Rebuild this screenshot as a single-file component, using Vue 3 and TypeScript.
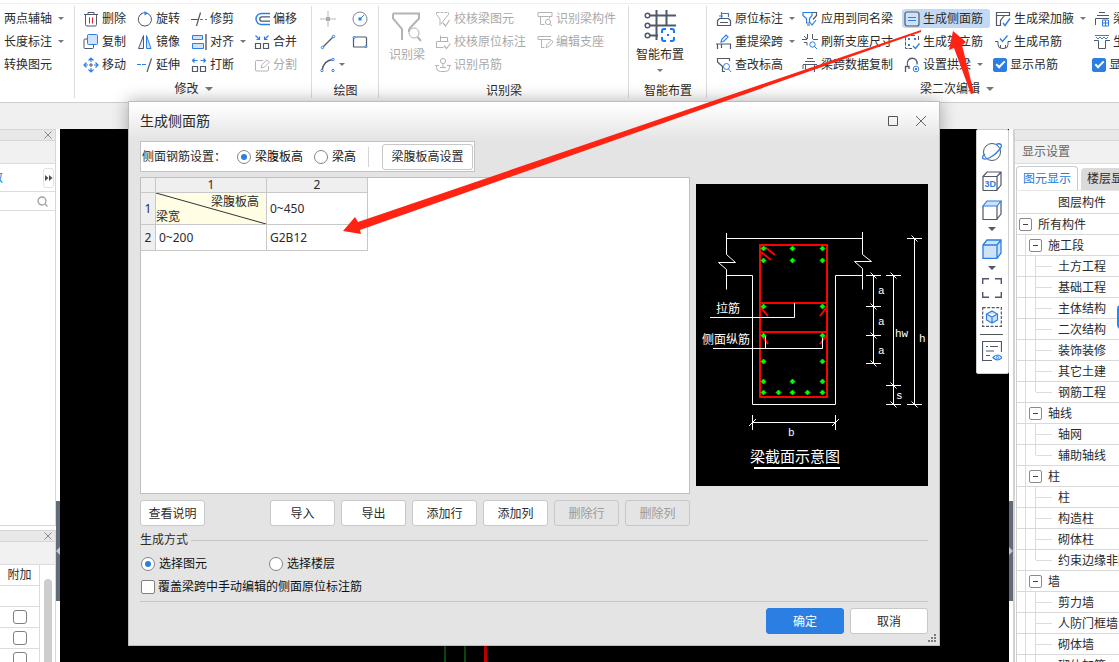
<script setup lang="ts">
import { ref } from 'vue'

interface Tool {
  icon?: string
  label?: string
  caret?: boolean
  disabled?: boolean
  active?: boolean
  check?: boolean
}
interface Group {
  id: string
  caption: string
  captionCaret?: boolean
  big?: { icon: string; label: string; caret?: boolean; disabled?: boolean }
  tools: Tool[]
}
interface Node {
  level: 0 | 1 | 2
  label: string
  last?: boolean
}

const D = '#50586a'
const B = '#2b7fe6'
const G = '#b4b4b4'
const L = '#cfe2fa'
const s = (c: string, d: string, extra = '') => `<path d="${d}" fill="none" stroke="${c}" ${extra}/>`
const f = (c: string, d: string) => `<path d="${d}" fill="${c}"/>`
const ring = (c: string, x: number, y: number, r: number, fill = 'none') =>
  `<circle cx="${x}" cy="${y}" r="${r}" fill="${fill}" stroke="${c}"/>`

const icons: Record<string, string> = {
  trash: s(D, 'M1 3.5h14M5 3.5v-2h6v2M2.5 4v9.5q0 1.5 1.5 1.5h8q1.5 0 1.5-1.5V4') + s('#d22', 'M6.5 6.5v6M9.5 6.5v6'),
  rotate: s(D, 'M10 2.2A6.6 6.6 0 1 1 5.5 2.3') + s(B, 'M4 2.6A7 7 0 0 1 9 2') + f(B, 'M7.5 0l3.5 2.2-3.5 2.3z'),
  trim: s(D, 'M0 8.5h7M9.5 1.5L5.5 15', 'stroke-width="1.2"') + s(B, 'M9 8.5h3M14 8.5h2', 'stroke-width="1.2"'),
  offset: s(B, 'M16 2.5H7.5a5.5 5.5 0 0 0 0 11H16', 'stroke-width="1.4"') + s(D, 'M16 5.8H8a2.2 2.2 0 0 0 0 4.4H16', 'stroke-width="1.3"'),
  copy: s(D, 'M10.5 11v2.5q0 1-1 1h-7.5q-1 0-1-1V6q0-1 1-1h2') + `<rect x="4.5" y="0.5" width="10" height="10" rx="1" fill="${L}" stroke="${B}"/>`,
  mirror: `<path d="M6.5 1.5v13H1.5z" fill="#eef0f3" stroke="${D}"/><path d="M9.5 1.5v13h4.500z" fill="${L}" stroke="${B}"/>`,
  align: `<path d="M1.5 1.5h10v4h-10zM1.5 9.5h11v5h-11z" fill="${L}" stroke="${B}"/>` + s(D, 'M15 0v16', 'stroke-width="1.4"'),
  merge: s(D, 'M1.5 9.5h5v5h-5zM9.5 9.5h5v5h-5z', 'stroke-width="1.2"') + s(B, 'M1.5 1.5l3.5 3.5M5.5 2.5v3h-3M14.5 1.5L11 5M10.5 2.5v3h3', 'stroke-width="1.2"'),
  move: s(B, 'M8 1v4M8 11v4M1 8h4M11 8h4M5.5 3.5L8 1l2.500 2.500M5.5 12.5L8 15l2.5-2.5M3.5 5.5L1 8l2.5 2.5M12.5 5.5L15 8l-2.5 2.5', 'stroke-width="1.2"') + f(D, 'M7.5 6h1v4h-1zM6 7.5h4v1H6z'),
  extend: s(B, 'M0 7.5h4M5 7.5h4', 'stroke-width="1.2"') + s(D, 'M14.5 1.5L10 15', 'stroke-width="1.2"'),
  split: s(D, 'M1.5 9.5h5v5h-5zM9.5 9.5h5v5h-5z', 'stroke-width="1.2"') + s(B, 'M1.5 3.5h5M3.5 1.5l-2 2 2 2M14.5 3.5h-5M12.5 1.5l2 2-2 2', 'stroke-width="1.2"'),
  cut: s(G, 'M9 3.5H2.5q-1 0-1 1V13q0 1 1 1h11q1 0 1-1V9M7 11l1-3.5L13 3l2.5 2L10.5 10z'),
  point: s('#b9b9b9', 'M8 0v6M8 10v6M0 8h6M10 8h6') + f('#aaa', 'M6 6h4v4H6z'),
  circle: s('#7c8290', 'M15 8A7 7 0 1 1 8 1a7 7 0 0 1 7 7z') + s(B, 'M8 8l4-4') + f(B, 'M6.500 6.500h3v3h-3z'),
  line: s(D, 'M2.5 13.5l11-11', 'stroke-width="1.3"') + ring(B, 2.5, 13.5, 1.2, '#fff') + ring(B, 13.5, 2.5, 1.2, '#fff'),
  rect: s(D, 'M2.5 3h11q1 0 1 1v9H2.5q-1 0-1-1V4', 'stroke-width="1.2"') + ring(B, 2, 3.5, 1, '#fff') + ring(B, 14, 12.5, 1, '#fff'),
  arc: s(D, 'M2 13.5C3 7 7 3 13 2.5', 'stroke-width="1.3"') + ring(B, 2, 13.5, 1.2, '#fff') + ring(B, 13, 2.5, 1.2, '#fff') + ring(B, 13, 13.5, 1.2, '#fff'),
  checkElem: s(G, 'M1.5 1.5h12', 'stroke-dasharray="3 1"') + s(G, 'M1.5 1.5v2L5 8v6.5M13.5 1.5v2L6 13') + s(G, 'M8 12l2.5 3 4-6', 'stroke-width="1.2"'),
  checkNote: s(G, 'M5.5 7V1.5M5.5 3.5h7M12.5 3.5V7M1.5 14V7.5h12M1.5 13.5h7') + s(G, 'M9 11.5l2.5 3 4-5', 'stroke-width="1.2"'),
  hook: ring(G, 8, 4, 2.6) + s(G, 'M8 7v4M1.5 8.5v2q0 4 4 4h5q4 0 4-4v-2M0 8.5h4M12 8.5h4M5 10.5h6'),
  findBeam: s(G, 'M1 1.5h14v4H1zM3.5 5.5v8h4M12.5 5.5v2') + ring(G, 11, 11, 2.6) + s(G, 'M13 13l2 2'),
  editSeat: s(G, 'M1 2.5h13M1 2.5v3h13M4.5 5.5v8h3M9 13.5l1-3L14.5 6l1.5 2-4 4.500z'),
  note: s(D, 'M1.5 14.5v-5l2-2h9l2 2v5zM4 11.5h8', 'stroke-width="1.2"') + s(B, 'M5.5 7V1M5.500 2.500h7V6M3 5h4', 'stroke-width="1.2"'),
  respan: s(D, 'M1.5 15v-5h13v5M5.5 10v4M0 10h3', 'stroke-width="1.2"') + s(B, 'M5 8l1-3L10 1l2 2-4.5 4.5z', 'stroke-width="1.2"'),
  funnelFind: s(D, 'M9 14.5H6.500v-5L1.500 5V1.5h12V4', 'stroke-width="1.2"') + ring(B, 10.5, 9.5, 3) + s(B, 'M12.5 12l2.5 3'),
  applySame: s(D, 'M5 1.5h9.5v3L11 8.5M5 14h3', 'stroke-width="1.2"') + s(B, 'M1 1.5h9v3L7.5 7.5V12H4.5V7.5L1 4.5z', 'stroke-width="1.2"') + s(B, 'M8 11.5l2 2.500 4-5', 'stroke-width="1.2"'),
  refresh: s(D, 'M0 5.5h5M5.5 0v5M10.5 0v5M11 5.5h5M2 8.5h3v3M2 2l3 3') + ring(B, 10.5, 10.5, 2.7) + s(B, 'M12.5 12.5l2.5 2.500'),
  spanCopy: s(D, 'M5 1.5h6M3 4.5h10M1 7.5h14M3.5 8v7M12.5 8v7M1 12V8M15 12V8'),
  sideBar: `<rect x="1" y="1" width="14" height="14" rx="2" fill="${L}" stroke="${D}" stroke-width="1.2"/>` + s(B, 'M4 6.5h8M4 9.5h8', 'stroke-width="1.2"'),
  erectBar: s(D, 'M11 1.5H2.5q-1 0-1 1V14.5H8M14.5 2v5', 'stroke-dasharray="4 1"') + f(B, 'M4 4h2v2H4zM10 4h2v2h-2zM4 10h2v2H4z') + s(B, 'M9 12l2.5 2.5 4-5', 'stroke-width="1.3"'),
  archBeam: s(D, 'M3.5 8.5C1.5 -1 14.5 -1 13 7.5M1.500 15V9.5h3.5V12', 'stroke-width="1.3"') + ring(B, 12, 12, 2.8) + f(B, 'M11 11h2v2h-2z'),
  haunch: s(D, 'M1.5 1.5h13v3h-13zM1.5 4.5v10h4v-5l4-5', 'stroke-width="1.2"') + s(B, 'M8 12l2 2.5 5-7', 'stroke-width="1.4"'),
  makeHook: s(D, 'M0 7.5h3v3q0 4 4 4h2q4 0 4-4v-3h3M5.5 11v3M10.5 11v3') + s(B, 'M5 4.5l2.5 3 5-6', 'stroke-width="1.3"'),
  beamA: s(D, 'M5 1.5h6M3 4.5h12M1.5 14V7.5H15') + `<path d="M8.5 9h6v6h-6zM11.5 9v6M8.5 12h6" fill="none" stroke="${B}"/>`,
  beamB: s(B, 'M1 1.5h14M2 3l2 2 2-2 2 2 2-2 2 2 2-2') + s(D, 'M0 6.5h4.5v8h7v-8H16'),
  bigFunnel: s(G, 'M2 3.5h26v5L18 19M2 3.5v5L11 19v11', 'stroke-width="2"') + ring(G, 23, 23, 5) + s(G, 'M26.5 27l3.5 4M18 19v3', 'stroke-width="2"'),
  bigLayout: s(D, 'M5 5.5h27M5 15.5h27M5 25.5h9M12.5 0v30M22.5 0v16', 'stroke-width="2"') + f('#fff', 'M0 3h6v5H0zM0 13h6v5H0zM0 23h6v5H0z') +
    [5.5, 15.5, 25.5].map(y => `<circle cx="3.5" cy="${y}" r="2.3" fill="#fff" stroke="${D}" stroke-width="1.5"/>`).join('') +
    `<rect x="15" y="18" width="16" height="15" fill="#fff"/>` +
    s('#1677ff', 'M18 23v-2q0-2 2-2h2M26 19h2q2 0 2 2v2M30 27v2q0 2-2 2h-2M22 31h-2q-2 0-2-2v-2', 'stroke-width="2"') + f('#1677ff', 'M23 24h2v2h-2z'),
  orbit: ring(D, 10, 10, 8.5) + s(B, 'M3 12C-2 16 1 19 8 15.5S21 4 19 2.5s-4-.5-5 0', 'stroke-width="1.3"'),
  cube3d: s(D, 'M1 5.5h14v14H2q-1 0-1-1zM1 5.5L5 1h14v13l-4 5M15 5.5L19 1', 'stroke-width="1.2"') + `<text x="2.5" y="16" font-size="9" font-weight="700" font-family="Liberation Sans, sans-serif" fill="${B}">3D</text>`,
  cubeTop: s(D, 'M1 6v13.5h14V6M15 19l4-5V1', 'stroke-width="1.2"') + `<path d="M1 6l4-5h14l-4 5z" fill="${L}" stroke="${B}" stroke-width="1.2"/>`,
  cubeFull: `<path d="M1 6l4-5h14v13l-4 5.5H1zM1 6h14v13M15 6l4-5" fill="${L}" stroke="${B}" stroke-width="1.3"/>`,
  frame: s(D, 'M.7 6V.7H7M13 .7h6.300V6M19.3 14v5.300H13M7 19.300H.7V14', 'stroke-width="1.4"'),
  isolate: `<rect x="0.7" y="0.7" width="18.6" height="18.6" fill="none" stroke="${D}" stroke-dasharray="3 1.5" stroke-width="1.2"/>` + `<path d="M10 4l5.5 3v6L10 16l-5.5-3V7zM4.5 7L10 10l5.5-3M10 10v6" fill="${L}" stroke="${B}" stroke-width="1.2"/>`,
  listEye: s(D, 'M10 19.5H.5V.5h19V11M4 5.5h2M8 5.5h8M4 10h8M4 14.5h4', 'stroke-width="1.2"') + s(B, 'M11 16.5q4.5-5 9 0q-4.5 5-9 0z', 'stroke-width="1.2"') + ring(B, 15.5, 16.5, 1.2),
}

const groups: Group[] = [
  { id: 'axis', caption: '', tools: [{ label: '两点辅轴', caret: true }, { label: '长度标注', caret: true }, { label: '转换图元' }] },
  {
    id: 'modify', caption: '修改', captionCaret: true,
    tools: [
      { icon: 'trash', label: '删除' }, { icon: 'copy', label: '复制' }, { icon: 'move', label: '移动' },
      { icon: 'rotate', label: '旋转' }, { icon: 'mirror', label: '镜像' }, { icon: 'extend', label: '延伸' },
      { icon: 'trim', label: '修剪' }, { icon: 'align', label: '对齐', caret: true }, { icon: 'split', label: '打断' },
      { icon: 'offset', label: '偏移' }, { icon: 'merge', label: '合并' }, { icon: 'cut', label: '分割', disabled: true },
    ],
  },
  { id: 'draw', caption: '绘图', tools: [{ icon: 'point' }, { icon: 'line' }, { icon: 'arc', caret: true }, { icon: 'circle' }, { icon: 'rect' }] },
  {
    id: 'identify', caption: '识别梁', big: { icon: 'bigFunnel', label: '识别梁', disabled: true },
    tools: [
      { icon: 'checkElem', label: '校核梁图元', disabled: true }, { icon: 'checkNote', label: '校核原位标注', disabled: true }, { icon: 'hook', label: '识别吊筋', disabled: true },
      { icon: 'findBeam', label: '识别梁构件', disabled: true }, { icon: 'editSeat', label: '编辑支座', disabled: true },
    ],
  },
  { id: 'layout', caption: '智能布置', big: { icon: 'bigLayout', label: '智能布置', caret: true }, tools: [] },
  {
    id: 'beam', caption: '梁二次编辑', captionCaret: true,
    tools: [
      { icon: 'note', label: '原位标注', caret: true }, { icon: 'respan', label: '重提梁跨', caret: true }, { icon: 'funnelFind', label: '查改标高' },
      { icon: 'applySame', label: '应用到同名梁' }, { icon: 'refresh', label: '刷新支座尺寸' }, { icon: 'spanCopy', label: '梁跨数据复制' },
      { icon: 'sideBar', label: '生成侧面筋', active: true }, { icon: 'erectBar', label: '生成架立筋' }, { icon: 'archBeam', label: '设置拱梁', caret: true },
      { icon: 'haunch', label: '生成梁加腋', caret: true }, { icon: 'makeHook', label: '生成吊筋' }, { label: '显示吊筋', check: true },
      { icon: 'beamA', label: '梁加密筋' }, { icon: 'beamB', label: '生成支座' }, { label: '显示加密', check: true },
    ],
  },
]

const tree: Node[] = [
  { level: 0, label: '所有构件' },
  { level: 1, label: '施工段' },
  { level: 2, label: '土方工程' }, { level: 2, label: '基础工程' }, { level: 2, label: '主体结构' }, { level: 2, label: '二次结构' },
  { level: 2, label: '装饰装修' }, { level: 2, label: '其它土建' }, { level: 2, label: '钢筋工程', last: true },
  { level: 1, label: '轴线' },
  { level: 2, label: '轴网' }, { level: 2, label: '辅助轴线', last: true },
  { level: 1, label: '柱' },
  { level: 2, label: '柱' }, { level: 2, label: '构造柱' }, { level: 2, label: '砌体柱' }, { level: 2, label: '约束边缘非阴影区', last: true },
  { level: 1, label: '墙' },
  { level: 2, label: '剪力墙' }, { level: 2, label: '人防门框墙' }, { level: 2, label: '砌体墙' }, { level: 2, label: '砌体加筋' },
]

const viewTools = ['orbit', 'cube3d', 'cubeTop', '', 'cubeFull', '', 'frame', 'isolate', '-', 'listEye']
const gridButtons = [
  { label: '导入' }, { label: '导出' }, { label: '添加行' }, { label: '添加列' },
  { label: '删除行', disabled: true }, { label: '删除列', disabled: true },
]

const dots: [number, number][] = [
  [67.5, 64.5], [96.5, 64.5], [126.5, 64.5], [67.5, 76.5], [96.5, 76.5], [126.5, 76.5],
  [67.5, 122.5], [126.5, 122.5], [67.5, 151.5], [126.5, 151.5], [67.5, 177.5], [126.5, 177.5],
  [67.5, 197.5], [96.5, 197.5], [126.5, 197.5],
  [67.5, 208.5], [82.5, 208.5], [96.5, 208.5], [111.5, 208.5], [126.5, 208.5],
]
const ticks: [number, number][] = [
  [177.5, 91.5], [177.5, 122.5], [177.5, 151.5], [177.5, 179.5],
  [197.5, 91.5], [197.5, 201.5], [197.5, 220.5], [218.5, 54.5], [218.5, 220.5],
]

const basis = ref('web')
const method = ref('element')
const overwrite = ref(false)
const rowsChecked = ref([false, false, false])
</script>

<template>
  <div class="app">
    <header class="ribbon">
      <section v-for="g in groups" :key="g.id" class="group" :class="g.id">
        <div class="group-body">
          <button v-if="g.big" class="big" :class="{ disabled: g.big.disabled }" :disabled="g.big.disabled">
            <svg width="32" height="33" viewBox="0 0 32 33" aria-hidden="true" v-html="icons[g.big.icon]"></svg>
            <span>{{ g.big.label }}</span>
            <i v-if="g.big.caret" class="caret"></i>
          </button>
          <div v-if="g.tools.length" class="tools">
            <template v-for="(t, i) in g.tools" :key="i">
              <label v-if="t.check" class="tool checked-tool"><input type="checkbox" class="box" checked /><span>{{ t.label }}</span></label>
              <button v-else class="tool" :class="{ active: t.active, disabled: t.disabled }" :disabled="t.disabled" :aria-label="t.label ?? t.icon">
                <svg v-if="t.icon" width="16" height="16" viewBox="0 0 16 16" aria-hidden="true" v-html="icons[t.icon]"></svg>
                <span v-if="t.label">{{ t.label }}</span>
                <i v-if="t.caret" class="caret"></i>
              </button>
            </template>
          </div>
        </div>
        <div v-if="g.caption" class="caption" :class="{ plain: !g.captionCaret }">{{ g.caption }}<i v-if="g.captionCaret" class="caret wide"></i></div>
      </section>
    </header>
    <div class="strip"></div>

    <main class="workspace">
      <aside class="left">
        <section class="dock grow">
          <div class="dock-head"><button class="x" aria-label="关闭"><svg width="8" height="8" viewBox="0 0 8 8"><path d="M.5.5l7 7M7.5.5l-7 7" stroke="#8a8a8a" /></svg></button></div>
          <div class="dock-sub"></div>
          <div class="dock-nav">
            <a href="#" class="cut-link">参数</a>
            <button class="more" aria-label="更多"><svg width="8" height="6" viewBox="0 0 8 6"><path d="M0 0l3.5 3L0 6zM4 0l3.5 3L4 6z" fill="#4a4f5c" /></svg></button>
          </div>
          <div class="dock-search"><svg width="11" height="11" viewBox="0 0 11 11"><circle cx="5" cy="5" r="4" fill="none" stroke="#a0a0a0" stroke-width="1.3" /><path d="M8 8l2.5 2.5" stroke="#a0a0a0" stroke-width="1.3" /></svg></div>
        </section>
        <section class="dock lower">
          <div class="dock-head"><button class="x" aria-label="关闭"><svg width="8" height="8" viewBox="0 0 8 8"><path d="M.5.5l7 7M7.5.5l-7 7" stroke="#8a8a8a" /></svg></button></div>
          <div class="dock-sub"></div>
          <div class="extra">
            <table class="extra-table">
              <thead><tr><th>附加</th></tr></thead>
              <tbody>
                <tr><td></td></tr>
                <tr v-for="(_, i) in rowsChecked" :key="i"><td><input v-model="rowsChecked[i]" type="checkbox" class="box" aria-label="附加" /></td></tr>
              </tbody>
            </table>
            <div class="scroll"><div class="thumb"></div></div>
          </div>
        </section>
      </aside>
      <div class="splitter"><div class="grip"><svg width="4" height="8" viewBox="0 0 4 8"><path d="M4 0v8L0 4z" fill="#c5cad2" /></svg></div></div>

      <div class="canvas">
        <svg class="axes" width="50" height="40" viewBox="0 0 50 40" aria-hidden="true">
          <path d="M5 0v40M25 0v40" stroke="#0a4a10" stroke-width="2" />
          <path d="M45.5 0v40" stroke="#c00000" stroke-width="3" />
        </svg>
        <nav class="view-tools">
          <template v-for="(v, i) in viewTools" :key="i">
            <i v-if="v === ''" class="slot"><i class="caret dark"></i></i>
            <hr v-else-if="v === '-'" />
            <button v-else :aria-label="v"><svg width="20" height="20" viewBox="0 0 20 20" v-html="icons[v]"></svg></button>
          </template>
        </nav>
      </div>
      <div class="splitter"><div class="grip"><svg width="4" height="8" viewBox="0 0 4 8"><path d="M0 0v8l4-4z" fill="#c5cad2" /></svg></div></div>

      <aside class="right">
        <div class="dock-head"></div>
        <h2>显示设置</h2>
        <div class="tabs"><button class="tab on">图元显示</button><button class="tab">楼层显示</button></div>
        <div class="tree">
          <div class="tree-head">图层构件</div>
          <ul>
            <li v-for="(n, i) in tree" :key="i" :class="'l' + n.level">
              <i v-if="n.level > 0" class="guide"></i>
              <i v-if="n.level === 2" class="branch" :class="{ last: n.last }"></i>
              <button v-if="n.level < 2" class="toggle" aria-label="折叠"></button>
              <span>{{ n.label }}</span>
            </li>
          </ul>
        </div>
        <div class="side-pill"></div>
      </aside>
    </main>

    <section class="dialog" role="dialog" aria-labelledby="dlg-title">
      <header class="title">
        <h1 id="dlg-title">生成侧面筋</h1>
        <button aria-label="最大化"><svg width="12" height="12" viewBox="0 0 12 12"><path d="M1.5 1.5h9v9h-9z" fill="none" stroke="#555" /></svg></button>
        <button aria-label="关闭"><svg width="12" height="12" viewBox="0 0 12 12"><path d="M1 1l10 10M11 1L1 11" stroke="#666" /></svg></button>
      </header>
      <div class="content">
        <div class="settings">
          <span class="lead">侧面钢筋设置：</span>
          <label class="opt"><input v-model="basis" type="radio" value="web" name="basis" /><span>梁腹板高</span></label>
          <label class="opt"><input v-model="basis" type="radio" value="beam" name="basis" /><span>梁高</span></label>
          <i class="bar"></i>
          <button class="btn wide">梁腹板高设置</button>
        </div>
        <div class="split">
          <div class="sheet">
            <table>
              <thead>
                <tr><th class="num"></th><th class="c1">1</th><th class="c2">2</th></tr>
              </thead>
              <tbody>
                <tr class="tall">
                  <th>1</th>
                  <td class="corner">
                    <svg viewBox="0 0 110 31" preserveAspectRatio="none" aria-hidden="true"><path d="M0 0L110 31" stroke="#333" /></svg>
                    <div><span class="tr">梁腹板高</span><span class="bl">梁宽</span></div>
                  </td>
                  <td>0~450</td>
                </tr>
                <tr class="short"><th>2</th><td>0~200</td><td>G2B12</td></tr>
              </tbody>
            </table>
          </div>
          <svg class="figure" width="232" height="302" viewBox="0 0 232 302" role="img" aria-label="梁截面示意图">
            <rect width="232" height="302" fill="#000" />
            <g fill="none" stroke="#fff">
              <path d="M30.5 54.5H166.5M30.5 49V70.5L39.5 78.5H22.5L30.5 85.5V105.5M166.5 48V70.5L175.5 77.5H158.5L166.5 84.5V105.5" />
              <path d="M30.5 91.5H56.5V220.5H139.5V91.5H166.5" />
              <path d="M177.5 91.5V179.5M197.5 91.5V220.5M218.5 54.5V220.5M56.5 238.5H139.5M56.5 231V246M139.5 231V246M53 242L60 235M136 242L143 235" />
              <path v-for="([x, y], i) in ticks" :key="i" :d="`M${x - 7.5} ${y}h15M${x - 3} ${y - 3}l6 6`" />
            </g>
            <g fill="none" stroke="#f00" stroke-width="2">
              <path d="M64 61H131V213H64zM64 119H131M64 148H131M69 63L79 71M65 68L75 76M65 124L72 132M130 124L124 132M66 152L72 160M130 152L124 160" />
            </g>
            <path v-for="([x, y], i) in dots" :key="i" :d="`M${x - 2.5} ${y}l2.5-2.5 2.5 2.5-2.5 2.5z`" fill="#0f0" stroke="#0f0" stroke-width="0.7" />
            <path d="M14 133.5H98.5V119M17 164.5H126.5V154M69.5 164.5V152" fill="none" stroke="#fff" />
            <rect x="58" y="283" width="86" height="2" fill="#fff" />
            <g class="fig-text">
              <text x="20" y="129">拉筋</text>
              <text x="6" y="160">侧面纵筋</text>
              <text x="54" y="278" class="fig-title">梁截面示意图</text>
            </g>
            <g class="fig-dim">
              <text x="182" y="110">a</text><text x="182" y="141">a</text><text x="182" y="170">a</text>
              <text x="199" y="153">hw</text><text x="223" y="158">h</text><text x="200" y="215">s</text><text x="92" y="252">b</text>
            </g>
          </svg>
        </div>
        <div class="actions">
          <button class="btn first">查看说明</button>
          <button v-for="b in gridButtons" :key="b.label" class="btn" :disabled="b.disabled">{{ b.label }}</button>
        </div>
        <div class="legend"><span>生成方式</span><i></i></div>
        <div class="choices">
          <label class="opt"><input v-model="method" type="radio" value="element" name="method" /><span>选择图元</span></label>
          <label class="opt"><input v-model="method" type="radio" value="floor" name="method" /><span>选择楼层</span></label>
        </div>
        <label class="opt overwrite"><input v-model="overwrite" type="checkbox" class="box" /><span>覆盖梁跨中手动编辑的侧面原位标注筋</span></label>
        <footer>
          <button class="btn large primary">确定</button>
          <button class="btn large">取消</button>
        </footer>
      </div>
      <svg class="resize" width="8" height="8" viewBox="0 0 8 8" aria-hidden="true"><path d="M6 0h2v2H6zM3 3h2v2H3zM6 3h2v2H6zM0 6h2v2H0zM3 6h2v2H3zM6 6h2v2H6z" fill="#777c86" /></svg>
    </section>

    <svg class="pointers" width="1000" height="240" viewBox="0 0 1000 240" aria-hidden="true">
      <path d="M921 30L921 32L360 230L361 234L343 231L355 217L358 222Z" fill="#ff2314" />
      <path d="M953 31L966 42L962 45L974 93L971 94L954 48L949 50Z" fill="#ff2314" />
    </svg>
  </div>
</template>

<style>
html, body, #app { height: 100%; }
body { margin: 0; overflow: hidden; }
</style>

<style scoped>
.app { position: relative; display: flex; flex-direction: column; height: 100%; overflow: hidden; background: #fff; color: #2b2b2b; font: 12px/16px "Liberation Sans", "Noto Sans CJK SC", sans-serif; }
.app *, .app *::before, .app *::after { box-sizing: border-box; }
button { font: inherit; color: inherit; padding: 0; border: 0; background: none; }
svg { display: block; flex: none; }
h1, h2, ul { margin: 0; padding: 0; font-weight: 400; list-style: none; }

.ribbon { display: flex; flex: none; height: 103px; padding-top: 3px; border-bottom: 1px solid #cfcfcf; background: linear-gradient(#f0f0f0, #f0f0f0) 0 3px / 100% 1px no-repeat #fff; }
.group { position: relative; display: flex; flex-direction: column; flex: none; padding-top: 4px; }
.group::after { content: ""; position: absolute; right: 0; top: 3px; bottom: 4px; width: 1px; background: #dcdcdc; }
.group-body { display: flex; height: 69px; }
.tools { display: grid; grid-auto-flow: column; grid-template-rows: repeat(3, 23px); align-items: center; justify-items: start; }
.tool { display: flex; align-items: center; height: 19px; gap: 3px; padding: 0 2px; border-radius: 3px; white-space: nowrap; }
.tool.active { padding-right: 7px; background: #c3d9f3; }
.disabled { color: #a9a9a9; }
.caret { flex: none; width: 0; height: 0; margin-left: 3px; border: 3px solid transparent; border-top-color: #777; border-bottom: 0; }
.caret.wide { margin-left: 6px; border-width: 4px 4px 0; }
.caret.dark { margin: 0; border-width: 4px 4px 0; border-top-color: #50586a; }
.caption { display: flex; align-items: center; justify-content: center; height: 26px; }
.caption.plain { padding-top: 4px; }
.axis { width: 75px; padding-left: 2px; }
.modify { width: 237px; }
.modify .tools { padding-left: 6px; grid-template-columns: 54px 54px 63px auto; }
.draw { width: 67px; }
.draw .tools { padding-left: 6px; grid-template-columns: 32px auto; }
.draw .caret { margin-left: 0; }
.identify { width: 250px; }
.identify .tools { padding-left: 3px; grid-template-columns: 102px auto; }
.layout { width: 78px; }
.beam { width: 500px; }
.beam .tools { padding-left: 7px; grid-template-columns: 86px 102px 91px 99px auto; }
.big { display: flex; flex-direction: column; align-items: center; gap: 4px; width: 48px; margin-left: 7px; padding-top: 3px; }
.identify .big { width: 46px; margin-left: 5px; }
.big .caret { margin: 2px 0 0; }
.box { appearance: none; flex: none; width: 14px; height: 14px; margin: 0; border: 1px solid #808080; border-radius: 2px; background: #fff; }
.box:checked { display: grid; place-items: center; border-color: #2b7fe2; background: #2b7fe2; }
.box:checked::after { content: ""; width: 9px; height: 5px; margin-bottom: 3px; border: solid #fff; border-width: 0 0 2px 2px; transform: rotate(-45deg); }
.checked-tool { padding-left: 0; }

.strip { flex: none; height: 26px; background: #f0f0f0; }
.workspace { display: flex; flex: 1; min-height: 0; }
.left { display: flex; flex-direction: column; flex: none; gap: 4px; width: 56px; }
.dock { border: 1px solid #d6d6d6; border-left: 0; background: #fff; overflow: hidden; }
.grow { flex: 1; min-height: 0; }
.lower { flex: none; height: 132px; border-bottom: 0; }
.dock-head { display: flex; align-items: center; justify-content: flex-end; height: 11px; padding-right: 3px; border-bottom: 1px solid #d6d6d6; background: #e8e8e8; }
.dock-sub { height: 23px; border-bottom: 1px solid #dcdcdc; background: #f1f1f1; }
.dock-nav { display: flex; align-items: center; justify-content: space-between; height: 28px; padding-right: 1px; border-bottom: 1px solid #dcdcdc; }
.cut-link { display: flex; justify-content: flex-end; width: 3px; overflow: hidden; color: #1a6fd6; text-decoration: none; white-space: nowrap; }
.more { display: grid; place-items: center; width: 11px; height: 20px; border: 1px solid #e2e2e2; border-radius: 3px; }
.dock-search { display: flex; align-items: center; justify-content: flex-end; height: 19px; padding-right: 7px; border-bottom: 1px solid #dcdcdc; }
.extra { display: flex; height: 100%; }
.extra-table { width: 40px; height: 105px; border-collapse: separate; border-spacing: 0; border-right: 1px solid #dcdcdc; }
.extra-table th, .extra-table td { height: 21px; padding: 0; border-bottom: 1px solid #dcdcdc; font-weight: 400; text-align: center; white-space: nowrap; }
.extra-table .box { display: block; margin: 0 auto; border-radius: 3px; }
.scroll { flex: 1; display: flex; justify-content: center; padding-top: 14px; }
.thumb { width: 8px; border-radius: 4px 4px 0 0; background: #cdcdcd; }
.splitter { display: flex; flex: none; flex-direction: column; justify-content: flex-end; width: 4px; padding-bottom: 61px; background: #fff; }
.grip { display: grid; place-items: center; height: 100px; background: #626b78; }
.canvas { position: relative; flex: 1; background: #000; }
.axes { position: absolute; left: 380px; bottom: 0; }
.view-tools { position: absolute; top: 0; right: 0; display: flex; flex-direction: column; align-items: center; width: 33px; padding: 7px 2px 8px 0; border: 1px solid #cfcfcf; border-radius: 2px; background: #fff; }
.view-tools button { display: grid; place-items: center; height: 29px; }
.slot { display: grid; place-items: center; height: 10px; }
.view-tools hr { width: 23px; height: 1px; margin: 3px 0 1px; border: 0; background: #555; }

.right { position: relative; flex: none; width: 106px; border-left: 2px solid #d2d2d2; overflow: hidden; border-top: 1px solid #d6d6d6; }
.right h2 { height: 23px; padding-left: 7px; border-bottom: 1px solid #dcdcdc; background: #f1f1f1; color: #666; font-size: 12px; line-height: 22px; }
.tabs { display: flex; align-items: flex-end; gap: 3px; height: 26px; padding-left: 1px; white-space: nowrap; }
.tab { height: 22px; padding: 0 6px; border-radius: 4px 4px 0 0; background: #dadada; }
.tab.on { height: 24px; border: 1px solid #c6c9d2; border-bottom: 0; background: #fff; color: #1f78e0; }
.tree { margin-left: 1px; border-left: 1px solid #d0d0d0; border-top: 1px solid #e8e8e8; white-space: nowrap; }
.tree-head, .tree li { height: 21px; border-bottom: 1px solid #d9d9d9; }
.tree-head { height: 23px; padding-left: 41px; line-height: 24px; }
.tree li { display: flex; align-items: center; }
.tree li.l0 { padding-left: 2px; }
.guide { flex: none; align-self: stretch; width: 4px; margin-left: 8px; border-left: 1px solid #dcdcdc; }
.l2 .guide { width: 10px; }
.branch { flex: none; align-self: stretch; width: 17px; border-left: 1px solid #dcdcdc; background: linear-gradient(#dcdcdc, #dcdcdc) 0 50% / 100% 1px no-repeat; }
.branch.last { border-image: linear-gradient(#dcdcdc 50%, transparent 50%) 1; }
.toggle { position: relative; flex: none; width: 13px; height: 13px; border: 1px solid #8a8a8a; border-radius: 2px; background: linear-gradient(#444, #444) center / 5px 1px no-repeat #fff; }
.tree span { padding: 2px 0 0 6px; }
.side-pill { position: absolute; top: 175px; right: -8px; width: 10px; height: 24px; border-radius: 4px; background: #1a8cff; }

.dialog { position: absolute; top: 101px; left: 128px; right: 179px; border: 1px solid #bdbdbd; background: linear-gradient(#fff, #f8f8f8 12px, #e4e4e4 38px); box-shadow: 0 0 16px rgba(0, 0, 0, .32); }
.title { display: flex; align-items: center; gap: 16px; height: 38px; padding: 0 12px 0 11px; }
.title h1 { flex: 1; font-size: 14px; line-height: 20px; }
.content { padding: 1px 11px 11px; }
.settings { display: flex; align-items: center; width: max-content; height: 31px; padding: 0 1px; border: 1px solid #c2c3ca; background: #fff; }
.lead { width: 95px; }
.opt { display: flex; align-items: center; gap: 4px; white-space: nowrap; color: #111; }
.opt input[type=radio] { appearance: none; display: grid; place-items: center; flex: none; width: 14px; height: 14px; margin: 0; border: 1px solid #848484; border-radius: 50%; background: #fff; }
.opt input[type=radio]:checked::after { content: ""; width: 6px; height: 6px; border-radius: 50%; background: #2b7fe2; }
.settings .opt { margin-right: 11px; }
.bar { width: 1px; height: 20px; margin: 0 13px 0 1px; background: #d4d4d4; }
.btn { width: 65px; height: 26px; padding-top: 1px; border: 1px solid #c8c8c8; border-radius: 3px; background: #fff; white-space: nowrap; }
.btn:disabled { background: transparent; color: #9b9b9b; }
.btn.wide { width: 91px; }
.btn.large { width: 78px; }
.btn.primary { border-color: #2b7fe2; background: #2b7fe2; color: #fff; }
.split { display: flex; gap: 6px; margin-top: 5px; }
.sheet { flex: 1; height: 317px; border: 1px solid #bfbfbf; background: #fff; }
.sheet table { table-layout: fixed; width: 227px; border-collapse: separate; border-spacing: 0; font-family: "Noto Sans", "Noto Sans CJK SC", sans-serif; }
.sheet th, .sheet td { padding: 0 0 0 3px; border: solid #c8c8c8; border-width: 0 1px 1px 0; font-weight: 400; text-align: left; }
.sheet th { padding: 0; background: #efefef; text-align: center; }
.sheet thead tr { height: 15px; }
.sheet thead th { line-height: 14px; }
.num { width: 15px; }
.c1 { width: 111px; }
.c2 { width: 101px; }
.tall { height: 32px; }
.short { height: 26px; }
.sheet td.corner { position: relative; padding: 0; background: #fffde4; line-height: 15px; }
.corner svg { position: absolute; inset: 0; width: 100%; height: 100%; }
.corner div { display: flex; flex-direction: column; }
.tr { padding-right: 7px; text-align: right; }
.figure { margin-top: 7px; }
.fig-text { fill: #fff; font-family: "Noto Sans CJK SC", sans-serif; font-size: 12px; }
.fig-title { font-size: 15px; }
.fig-dim { fill: #fff; font-family: "Liberation Mono", monospace; font-size: 11px; }
.actions { display: flex; gap: 6px; margin-top: 6px; }
.first { margin-right: 59px; }
.legend { display: flex; align-items: center; gap: 3px; margin-top: 6px; }
.legend i { flex: 1; height: 1px; background: #c6c6c6; }
.choices { display: flex; margin-top: 8px; padding-left: 1px; }
.choices .opt { width: 128px; }
.overwrite { margin: 7px 0 6px; padding-left: 1px; gap: 3px; }
footer { display: flex; justify-content: flex-end; gap: 6px; padding-top: 6px; border-top: 1px solid #c6c6c6; }
.resize { position: absolute; right: 3px; bottom: 3px; }
.pointers { position: absolute; top: 0; left: 0; pointer-events: none; }
</style>
